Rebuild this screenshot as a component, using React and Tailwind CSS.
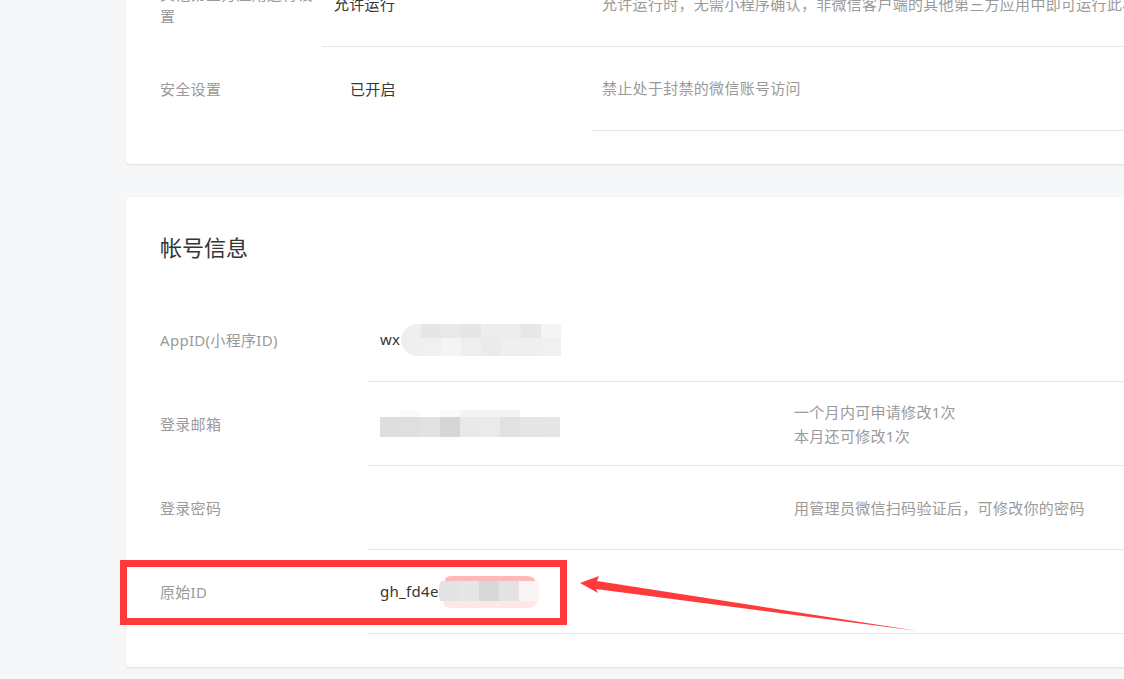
import React from 'react';

const font = { fontFamily: '"Noto Sans", "Noto Sans CJK SC", sans-serif' };

// mosaic blocks used to hide private values
const Mosaic = ({ rows, className }) => (
  <span className={`inline-flex flex-col align-middle ${className}`}>
    {rows.map((row, i) => (
      <span key={i} className="flex" style={{ height: row.h, marginLeft: row.offset || 0 }}>
        {row.cells.map((c, j) => (
          <span key={j} className="block w-[20px] h-full" style={{ background: c }} />
        ))}
      </span>
    ))}
  </span>
);

const InfoRow = ({ label, value, desc }) => (
  <div className="flex h-[84px]">
    <div className="w-[208px] flex items-center text-[15px] text-[#9a9a9a]">{label}</div>
    <div className="flex-1 flex border-b border-[#e7e7eb]">
      <div className="w-[414px] pl-[12px] flex items-center text-[15px] text-[#353535]">{value}</div>
      <div className="pl-[12px] flex flex-col justify-center text-[15px] leading-[24px] text-[#9a9a9a]">{desc}</div>
    </div>
  </div>
);

export default function App() {
  return (
    <div className="relative h-[679px] overflow-hidden bg-[#f6f7f9] tracking-[0.3px]" style={font}>
      <div className="pl-[126px]">
        {/* first card, scrolled partly out of view */}
        <div className="w-[1060px] -mt-[60px] pt-[23px] pb-[33px] pl-[34px] bg-white rounded-[4px] shadow-[0_1px_2px_rgba(0,0,0,0.1)]">
          <div className="flex h-[84px]">
            <div className="w-[162px] pr-[8px] flex items-center text-[15px] leading-[22px] text-[#9a9a9a]">
              其他第三方应用运行设置
            </div>
            <div className="flex-1 flex border-b border-[#e7e7eb]">
              <div className="w-[268px] pl-[12px] flex items-center text-[15px] text-[#353535]">允许运行</div>
              <div className="pl-[12px] flex items-center text-[15px] text-[#9a9a9a] whitespace-nowrap">
                允许运行时，无需小程序确认，非微信客户端的其他第三方应用中即可运行此小程序
              </div>
            </div>
          </div>
          <div className="flex h-[84px]">
            <div className="w-[178px] flex items-center text-[15px] text-[#9a9a9a]">安全设置</div>
            <div className="w-[253px] pl-[12px] flex items-center text-[15px] text-[#353535]">已开启</div>
            <div className="flex-1 pl-[11px] flex items-center border-b border-[#e7e7eb] text-[15px] text-[#9a9a9a]">
              禁止处于封禁的微信账号访问
            </div>
          </div>
        </div>

        {/* account info card */}
        <div className="w-[1060px] mt-[33px] pt-[36px] pb-[33px] pl-[34px] bg-white rounded-[4px] shadow-[0_1px_2px_rgba(0,0,0,0.1)]">
          <h2 className="text-[22px] leading-[28px] text-[#353535] font-normal tracking-normal">帐号信息</h2>
          <div className="mt-[37px]">
            <InfoRow
              label="AppID(小程序ID)"
              value={
                <span className="flex items-center">
                  <span>wx</span>
                  <span className="rounded-l-[16px] overflow-hidden ml-[1px]">
                    <Mosaic
                      rows={[
                        { h: 14, cells: ['#efefef', '#e6e6e6', '#e9e9e9', '#e6e6e6', '#ededed', '#ececec', '#e7e7e7', '#f4f4f4'] },
                        { h: 18, cells: ['#efefef', '#f0f0f0', '#f4f4f4', '#efefef', '#ebebeb', '#efefef', '#efefef', '#f0f0f0'] },
                      ]}
                    />
                  </span>
                </span>
              }
            />
            <InfoRow
              label="登录邮箱"
              value={
                <Mosaic
                  rows={[
                    { h: 7, offset: 20, cells: ['#fafafa', '#ffffff', '#fafafa', '#f4f4f4', '#f4f4f4', '#f4f4f4'] },
                    { h: 20, cells: ['#dedede', '#dfdfdf', '#e2e2e2', '#d6d6d6', '#e9e9e9', '#eaeaea', '#e1e1e1', '#e5e5e5', '#e6e6e6'] },
                  ]}
                />
              }
              desc={
                <>
                  <span>一个月内可申请修改1次</span>
                  <span>本月还可修改1次</span>
                </>
              }
            />
            <InfoRow label="登录密码" value="" desc="用管理员微信扫码验证后，可修改你的密码" />
            <InfoRow
              label="原始ID"
              value={
                <span className="flex items-center">
                  <span>gh_fd4e</span>
                  <span className="flex flex-col rounded-[12px] overflow-hidden">
                    <span className="block h-[5px] w-[90px] ml-[6px] bg-[#fdb9b9] rounded-t-[6px]" />
                    <Mosaic rows={[{ h: 20, cells: ['#e3e3e3', '#e6e6e6', '#d8d8d8', '#e3e3e3', '#fbf4f4'] }]} />
                    <span className="block h-[7px] w-[96px] ml-[4px] bg-[#fde7e7] rounded-b-[6px]" />
                  </span>
                </span>
              }
            />
          </div>
        </div>
      </div>

      {/* annotation: red frame and arrow */}
      <div className="absolute left-[120px] top-[560px] w-[447px] h-[65px] border-[7px] border-[#ff3a3a]" />
      <svg className="absolute left-0 top-0" width="1124" height="679" viewBox="0 0 1124 679">
        <polygon points="580,583 599,576 597,581 918,631 596,589 598,593" fill="#ff3a3a" />
      </svg>
    </div>
  );
}
